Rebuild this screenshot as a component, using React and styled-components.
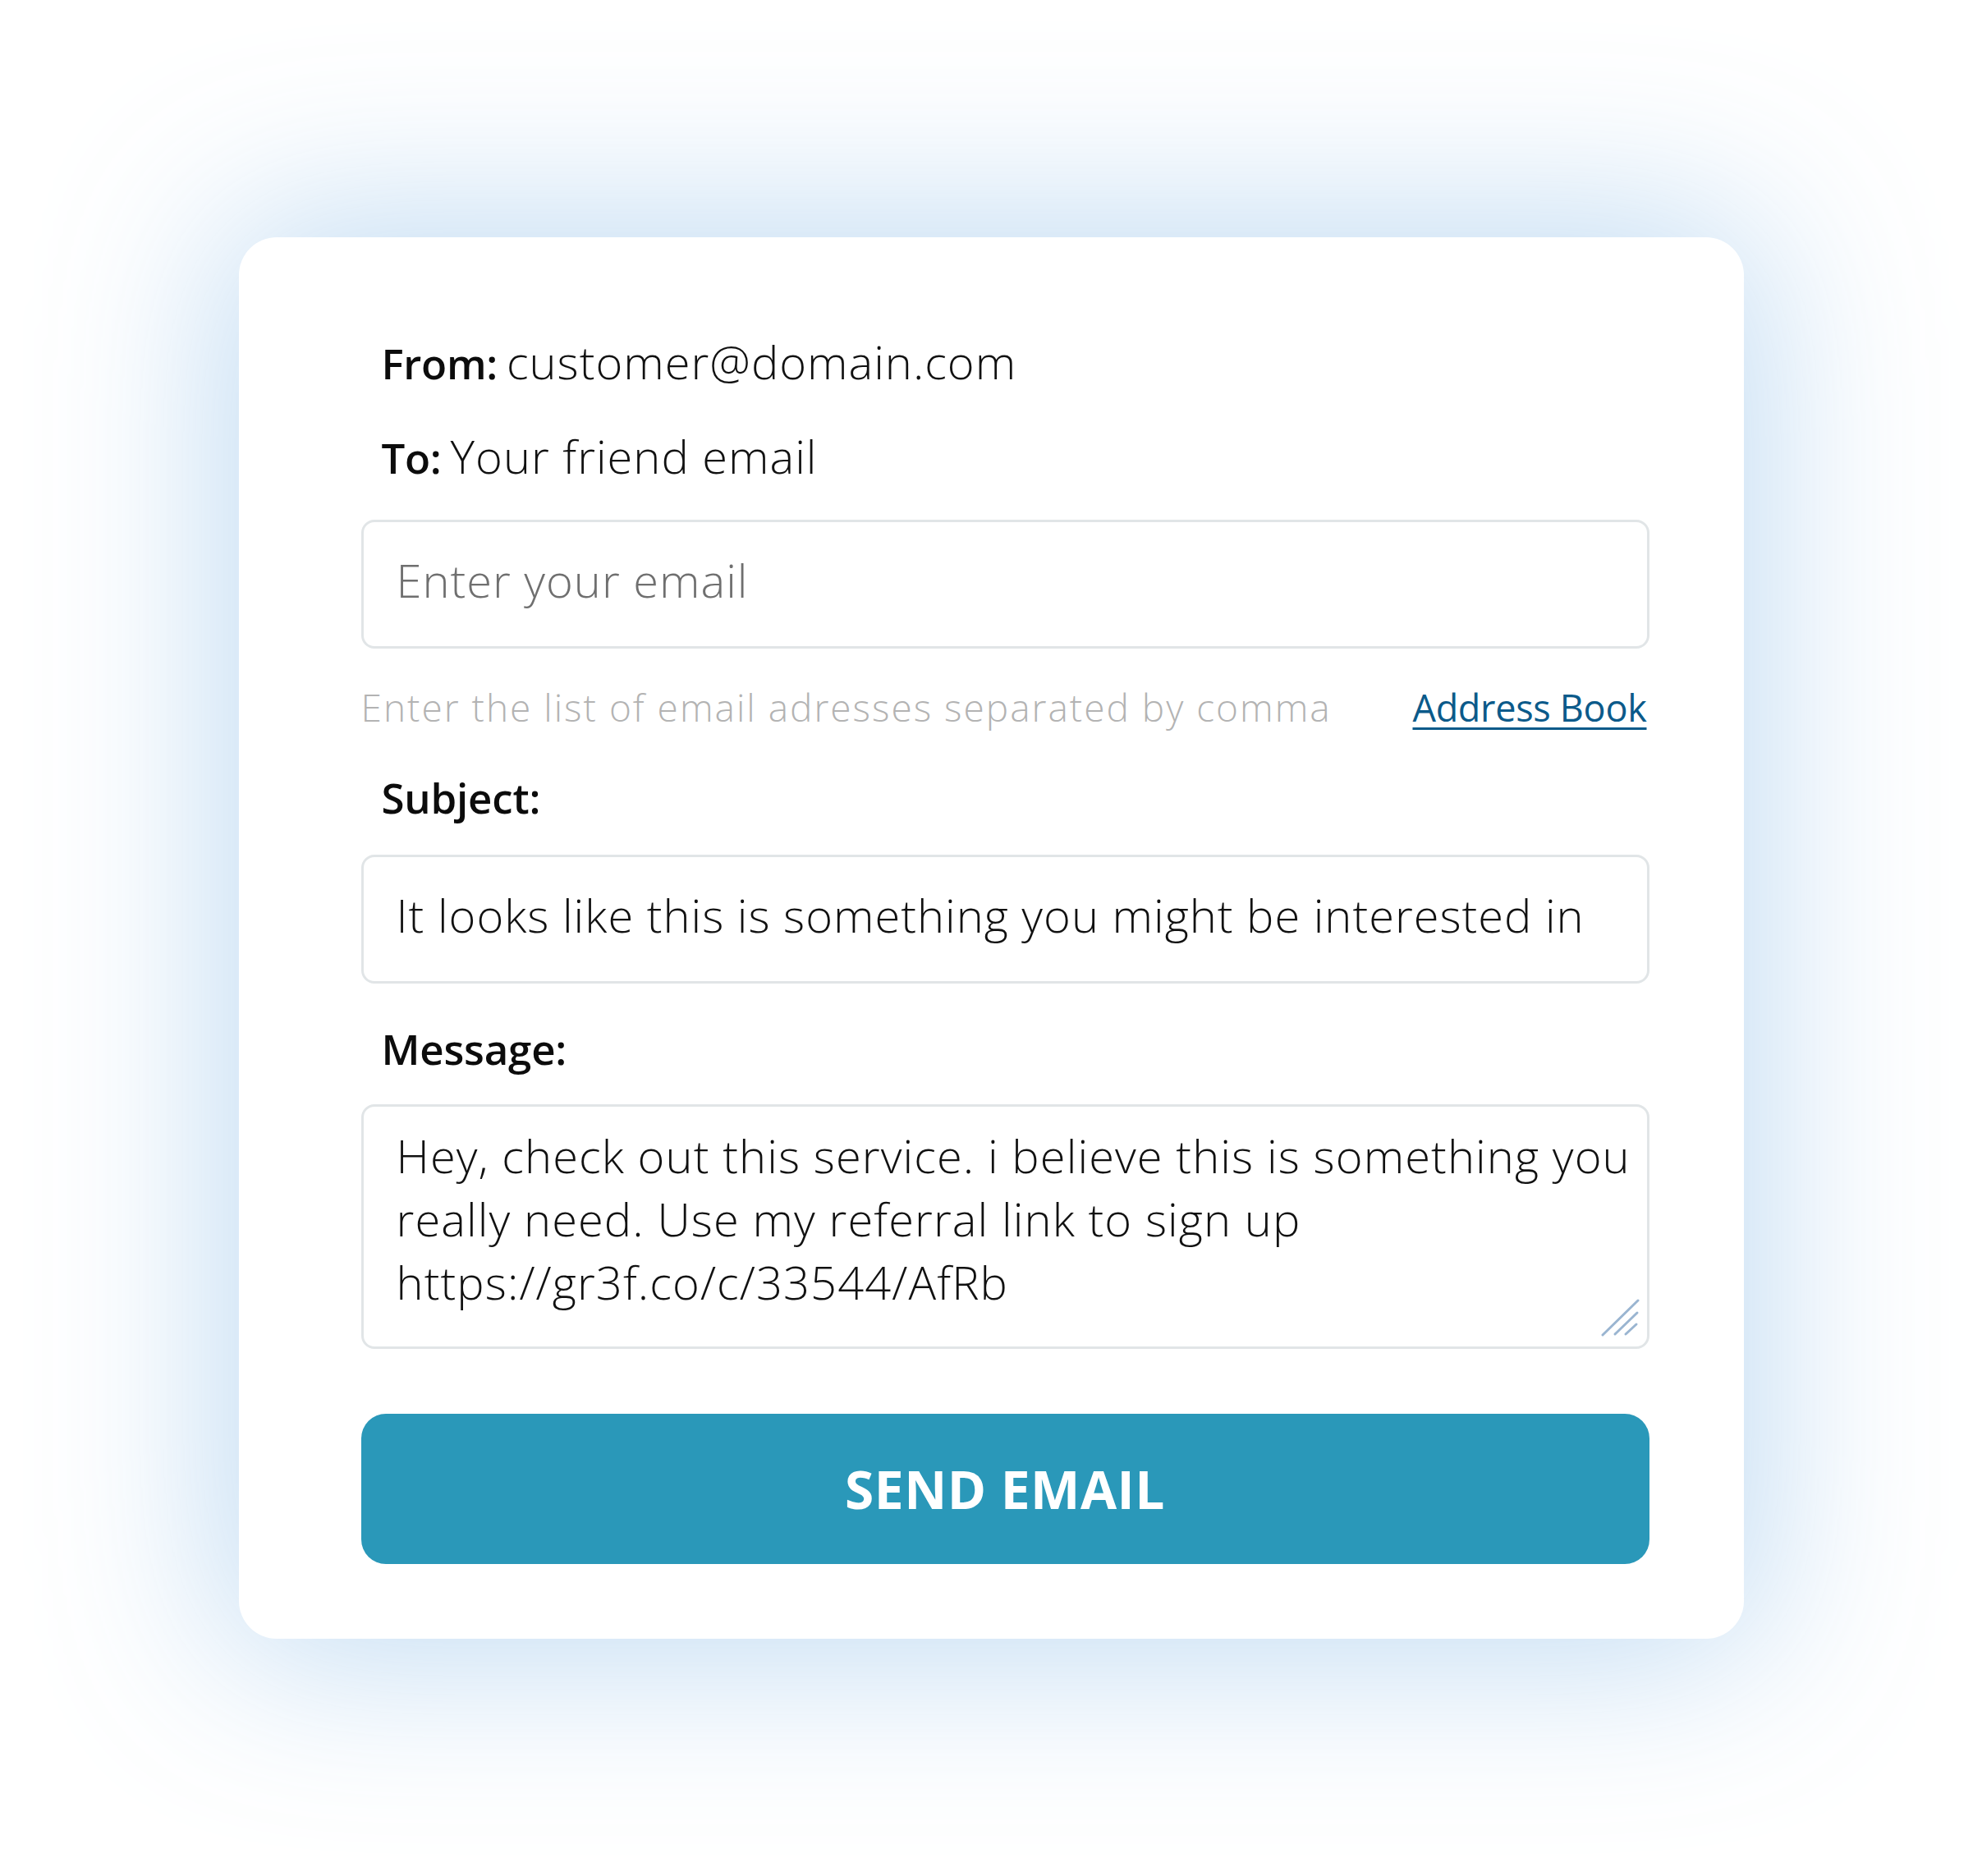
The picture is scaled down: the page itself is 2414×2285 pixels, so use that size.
import React from 'react'
import styled, { createGlobalStyle } from 'styled-components'

const GlobalStyle = createGlobalStyle`
  html, body {
    margin: 0;
    padding: 0;
    background: #ffffff;
  }
  body {
    font-family: "Open Sans", "Noto Sans", sans-serif;
    color: #111;
  }
`

const Page = styled.div`
  min-height: 2285px;
  display: flex;
  align-items: center;
  justify-content: center;
`

const Card = styled.div`
  width: 1833px;
  box-sizing: border-box;
  padding: 115px 115px 91px 149px;
  background: #fff;
  border-radius: 46px;
  box-shadow: 0 0 220px 20px rgba(180, 212, 240, 0.85);
  display: flex;
  flex-direction: column;
`

const InfoLine = styled.div`
  margin: ${p => p.$top || 0}px 0 0 25px;
  font-size: 56px;
  line-height: 72px;
  font-weight: 300;
  letter-spacing: 1px;
  color: #111;
  white-space: nowrap;
`

const Label = styled.span`
  font-size: 51px;
  font-weight: 600;
  letter-spacing: -0.3px;
  color: #0c0c0c;
  margin-right: 11px;
`

const FieldLabel = styled.div`
  margin: ${p => p.$top}px 0 0 25px;
  font-size: 51px;
  line-height: 72px;
  font-weight: 600;
  letter-spacing: -0.2px;
  color: #0c0c0c;
`

const TextInput = styled.input`
  margin-top: ${p => p.$top}px;
  box-sizing: border-box;
  width: 100%;
  height: 157px;
  padding: 0 36px 12px 40px;
  border: 3px solid #e1e5e7;
  border-radius: 16px;
  font-family: inherit;
  font-size: 56px;
  font-weight: 300;
  letter-spacing: 1px;
  color: #111;
  outline: none;
  background: #fff;

  &::placeholder {
    color: #6f6f6f;
    opacity: 1;
  }
`

const HintRow = styled.div`
  margin-top: 40px;
  padding-right: 3px;
  display: flex;
  justify-content: space-between;
  align-items: baseline;
  font-size: 46px;
  line-height: 62px;
`

const Hint = styled.span`
  font-weight: 300;
  letter-spacing: 2px;
  color: #b3b3b3;
`

const BookLink = styled.a`
  font-size: 45px;
  color: #0b5a8a;
  font-weight: 400;
  letter-spacing: -0.3px;
  text-decoration: underline;
  text-decoration-thickness: 3px;
  text-underline-offset: 7px;
  cursor: pointer;
`

const AreaWrap = styled.div`
  position: relative;
  margin-top: 32px;
`

const MessageArea = styled.textarea`
  display: block;
  box-sizing: border-box;
  width: 100%;
  height: 298px;
  padding: 21px 6px 0 40px;
  border: 3px solid #e1e5e7;
  border-radius: 16px;
  font-family: inherit;
  font-size: 56px;
  font-weight: 300;
  line-height: 77px;
  letter-spacing: 1.1px;
  color: #111;
  resize: none;
  outline: none;
  overflow: hidden;
`

const Grip = styled.svg`
  position: absolute;
  right: 12px;
  bottom: 14px;
  width: 48px;
  height: 48px;
  pointer-events: none;
`

const SendButton = styled.button`
  margin-top: 79px;
  height: 183px;
  width: 100%;
  border: none;
  border-radius: 30px;
  background: #2a98b9;
  color: #fff;
  font-family: inherit;
  font-size: 64px;
  font-weight: 700;
  letter-spacing: 0.5px;
  text-transform: uppercase;
  cursor: pointer;
`

const message =
  'Hey, check out this service. i believe this is something you\nreally need. Use my referral link to sign up\nhttps://gr3f.co/c/33544/AfRb'

export default function App() {
  return (
    <>
      <GlobalStyle />
      <Page>
        <Card>
          <InfoLine>
            <Label>From:</Label>customer@domain.com
          </InfoLine>
          <InfoLine $top={41}>
            <Label>To:</Label>Your friend email
          </InfoLine>

          <TextInput $top={40} type="text" placeholder="Enter your email" />

          <HintRow>
            <Hint>Enter the list of email adresses separated by comma</Hint>
            <BookLink>Address Book</BookLink>
          </HintRow>

          <FieldLabel $top={42}>Subject:</FieldLabel>
          <TextInput
            $top={34}
            type="text"
            defaultValue="It looks like this is something you might be interested in"
          />

          <FieldLabel $top={43}>Message:</FieldLabel>
          <AreaWrap>
            <MessageArea defaultValue={message} />
            <Grip viewBox="0 0 48 48">
              <g stroke="#9ab5d1" strokeWidth="3" strokeLinecap="round">
                <line x1="3" y1="45" x2="46" y2="3" />
                <line x1="18" y1="44" x2="45" y2="18" />
                <line x1="31" y1="44" x2="44" y2="32" />
              </g>
            </Grip>
          </AreaWrap>

          <SendButton>Send Email</SendButton>
        </Card>
      </Page>
    </>
  )
}
